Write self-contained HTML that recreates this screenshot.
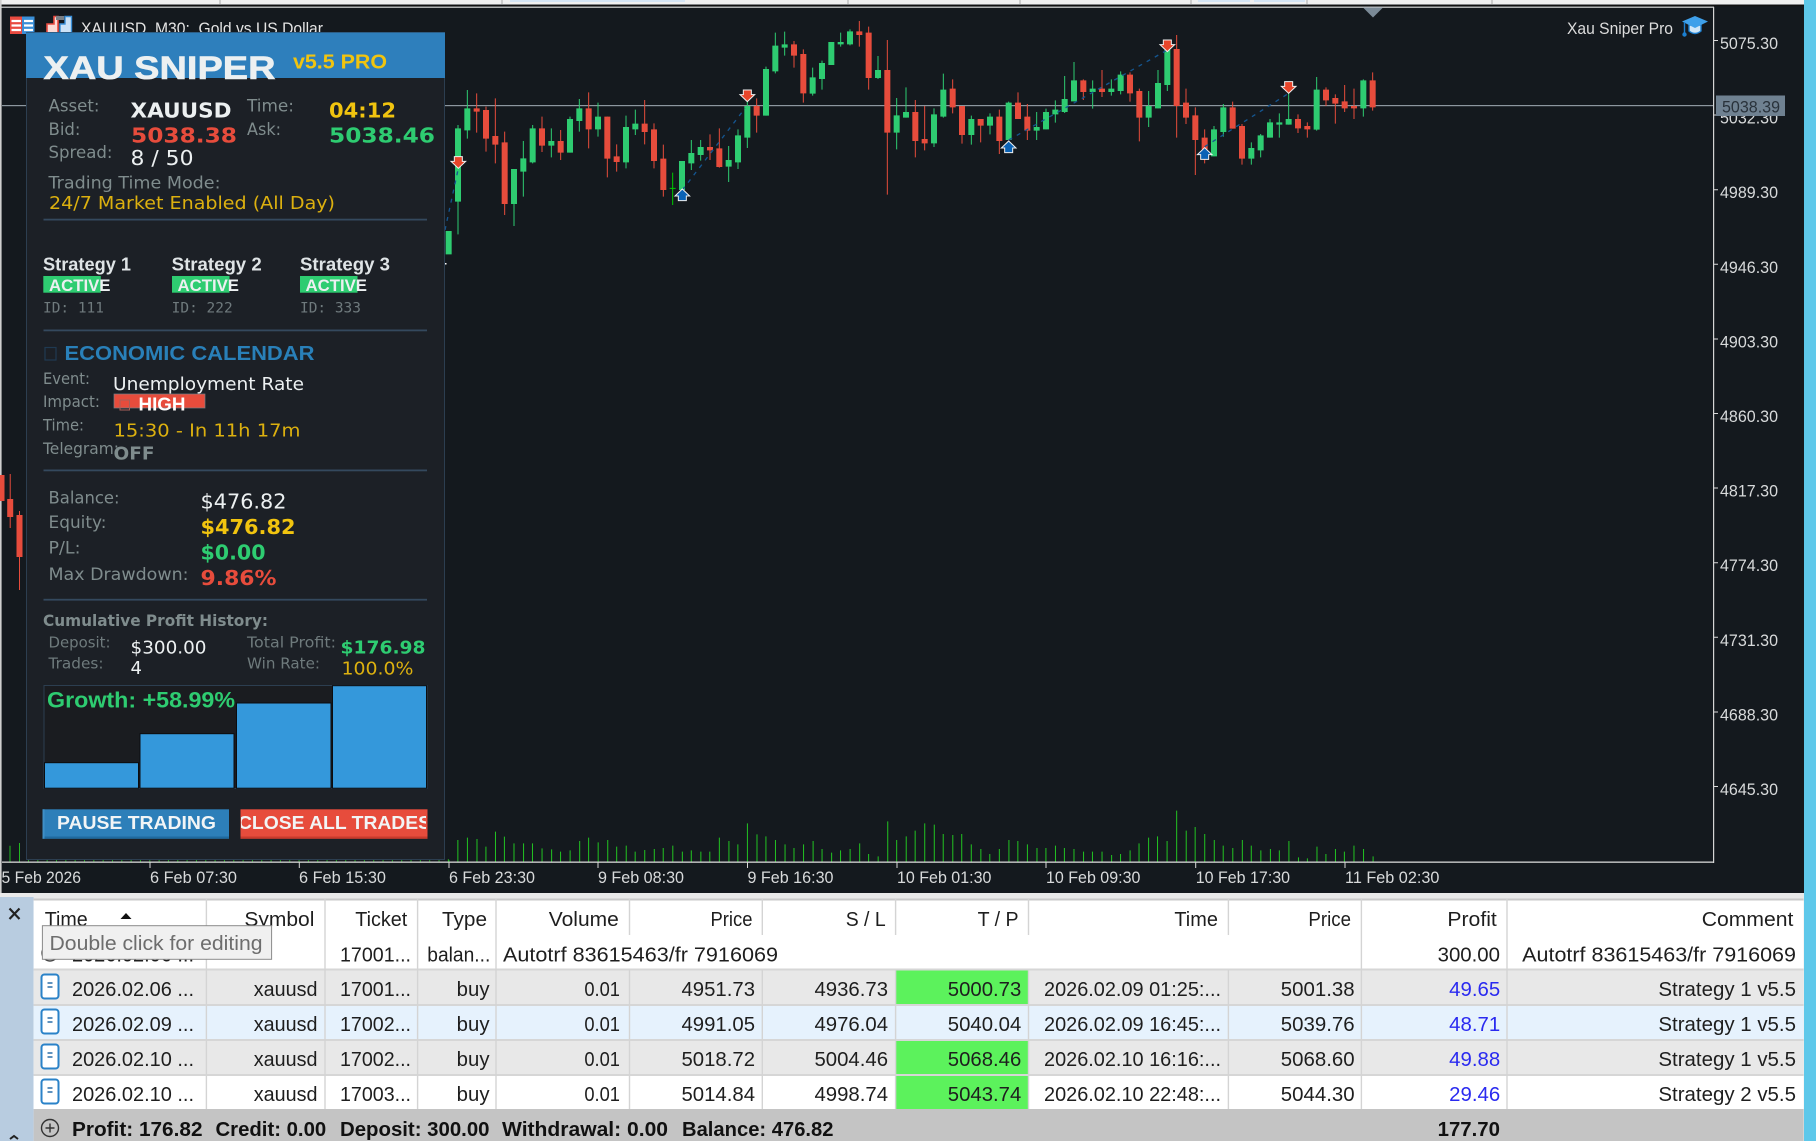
<!DOCTYPE html>
<html><head><meta charset="utf-8"><title>XAU Sniper</title>
<style>
html,body{margin:0;padding:0;background:#14191e;width:1816px;height:1141px;overflow:hidden}
svg{display:block;filter:blur(.35px)}
text{white-space:pre}
.d{font-family:"DejaVu Sans",sans-serif}
.db{font-family:"DejaVu Sans",sans-serif;font-weight:bold}
.l{font-family:"Liberation Sans",sans-serif}
.lb{font-family:"Liberation Sans",sans-serif;font-weight:bold}
.m{font-family:"DejaVu Sans Mono","Liberation Mono",monospace}
.g{fill:#7f8c8d}.w{fill:#ecf0f1}.y{fill:#f1c40f}.y2{fill:#dcb00f}.r{fill:#e74c3c}.n{fill:#2ecc71}
.ax{font-family:"Liberation Sans",sans-serif;font-size:17px;fill:#d8dadb}
.t{font-family:"Liberation Sans",sans-serif;font-size:20px;fill:#1e1e1e}
.tb{font-family:"Liberation Sans",sans-serif;font-size:20px;font-weight:bold;fill:#111}
.e{text-anchor:end}
.b{fill:#2a2af0}
</style></head><body>
<svg width="1816" height="1141" viewBox="0 0 1816 1141" xmlns="http://www.w3.org/2000/svg">
<defs>
<path id="ad" d="M-12 -17H12V-3H22L0 18L-22 -3H-12Z" fill="#e8452a" stroke="#f0f0f0" stroke-width="3"/>
<path id="au" d="M-12 17H12V3H22L0 -18L-22 3H-12Z" fill="#0a62b5" stroke="#f0f0f0" stroke-width="3"/>
<clipPath id="cl"><rect x="241" y="810" width="185" height="28"/></clipPath>
<clipPath id="chartclip"><rect x="0" y="7" width="1713" height="886"/></clipPath>
</defs>

<!-- base -->
<rect width="1816" height="1141" fill="#14191e"/>
<rect x="0" y="0" width="1816" height="4.5" fill="#f0f0f0"/>
<rect x="510" y="0" width="175" height="2" fill="#d5e5f5"/>
<rect x="1198" y="0" width="52" height="2" fill="#d5e5f5"/>
<rect x="1254" y="0" width="51" height="2" fill="#d5e5f5"/>
<rect x="1300" y="0" width="200" height="0" fill="#d5e5f5"/>
<rect x="1495" y="0" width="300" height="0" fill="#d5e5f5"/>
<path d="M220 0V4M502 0V4M848 0V4M1020 0V4M1191 0V4M1307 0V4M1492 0V4" stroke="#a8a8a8" stroke-width="1"/>
<rect x="0" y="5" width="1804" height="1.2" fill="#111"/>
<rect x="0" y="6.6" width="1714" height="1.2" fill="#d8d8d8"/>
<rect x="0" y="0" width="1.6" height="895" fill="#cfcfcf"/>
<rect x="1713" y="7" width="1.2" height="856" fill="#d5d5d5"/>

<!-- price line -->
<rect x="2" y="105" width="1711" height="1.2" fill="#8d979f"/>

<!-- volumes left and hidden -->
<path d="M10 862V845.7M19.5 862V843" stroke="#22b722" stroke-width="1"/>
<line x1="28" y1="860.5" x2="449" y2="860.5" stroke="#1f9d1f" stroke-width="3" stroke-dasharray="1 8.33"/>
<g transform="translate(440,780) scale(.6378,.3333)">
<path fill="none" stroke="#22c022" stroke-width="1.6" d="M14 247V240M28 247V180M43 247V173M58 247V177M72 247V200M87 247V155M101 247V170M116 247V190M131 247V190M145 247V190M160 247V205M175 247V208M189 247V215M204 247V211M219 247V183M233 247V173M248 247V187M263 247V180M277 247V200M292 247V197M306 247V215M321 247V210M336 247V207M350 247V204M365 247V197M380 247V215M394 247V211M409 247V215M423 247V215M438 247V173M453 247V183M467 247V193M482 247V130M497 247V163M511 247V169M526 247V180M541 247V193M555 247V204M570 247V193M585 247V183M599 247V207M614 247V218M628 247V211M643 247V207M658 247V190M672 247V222M687 247V229M702 247V124M716 247V180M731 247V169M745 247V152M760 247V130M775 247V134M789 247V162M804 247V165M818 247V162M833 247V193M848 247V207M862 247V222M877 247V207M892 247V180M906 247V183M921 247V193M936 247V204M950 247V204M965 247V197M979 247V204M994 247V207M1009 247V215M1023 247V215M1038 247V215M1053 247V225M1067 247V222M1082 247V211M1096 247V190M1111 247V173M1125 247V169M1140 247V183M1155 247V92M1170 247V152M1184 247V141M1199 247V162M1214 247V180M1228 247V197M1243 247V204M1258 247V180M1272 247V197M1287 247V211M1302 247V207M1316 247V211M1331 247V183M1346 247V232M1360 247V235M1375 247V200M1389 247V222M1404 247V207M1418 247V215M1433 247V197M1448 247V207M1463 247V229"/>
</g>

<!-- left red candles -->
<path d="M10.2 474V528M19.5 511V590" stroke="#e74c3c" stroke-width="1"/>
<path d="M1.5 475V501M10.2 499V517M19.5 515V557" stroke="#e74c3c" stroke-width="6" fill="none"/>

<!-- candles part 1 (coordinates in 3x) -->
<g transform="translate(440,0) scale(.33333)" fill="none">
<path stroke="#2ecc71" stroke-width="3" d="M54 375V703M82 270V416M222 507V678M250 423V590M278 375V490M334 385V472M390 350V458M418 297V395M474 308V410M558 347V505M586 329V405M726 483V575M754 420V510M782 420V482M866 438V546M894 388V507M922 305V444M978 200V347M1006 98V220M1034 95V167M1118 203V287M1146 182V269M1202 98V140M1230 88V136M1314 168V237M1370 294V448M1398 262V353M1482 325V441"/>
<path stroke="#e74c3c" stroke-width="3" d="M110 280V398M138 320V455M166 295V490M194 395V645M306 350V456M362 390V480M446 277V445M502 350V532M530 433V515M614 300V433M642 370V505M670 434V590M810 403V480M838 385V503M950 295V398M1062 123V203M1090 148V308M1258 63V140M1286 80V269M1342 120V584M1426 300V472M1454 318V451"/>
<path stroke="#2ecc71" stroke-width="18" d="M26 693V763M54 385V605M82 325V391M222 507V612M250 475V515M278 385V487M334 423V437M390 357V458M418 325V363M474 350V388M558 381V487M586 371V388M726 483V570M754 459V490M782 441V465M866 480V500M894 406V487M922 318V413M978 207V347M1006 137V214M1034 133V143M1118 232V281M1146 189V237M1174 126V195M1202 126V133M1230 94V133M1314 210V234M1370 346V398M1398 336V353M1482 343V430"/>
<path stroke="#e74c3c" stroke-width="18" d="M110 325V335M138 330V416M166 408V434M194 427V612M306 385V437M362 423V458M446 325V388M502 350V476M530 469V486M614 371V396M642 388V483M670 476V570M810 441V451M838 445V501M950 318V347M1062 133V167M1090 162V280M1258 94V105M1286 98V234M1342 210V398M1426 336V423M1454 417V430"/>
<path stroke="#00c800" stroke-width="3" d="M698 518V615M689 565H707"/>
<g stroke="#14558f" stroke-width="4" stroke-dasharray="12 16">
<path d="M15 690L55 505M727 570L915 325"/>
</g>
<use href="#ad" x="55" y="487"/><use href="#ad" x="922" y="287"/><use href="#au" x="727" y="585"/>
</g>
<!-- candles part 2 -->
<g transform="translate(930,0) scale(.33333)" fill="none">
<path stroke="#2ecc71" stroke-width="3" d="M40 221V353M124 347V434M180 340V403M236 305V420M320 336V420M348 326V388M376 301V368M404 228V339M432 186V304M488 241V326M544 238V287M572 214V283M656 273V381M684 210V325M712 140V273M852 378V469M880 312V410M964 427V494M992 402V472M1020 357V413M1048 340V413M1076 280V374M1160 231V392M1300 238V350"/>
<path stroke="#e74c3c" stroke-width="3" d="M68 238V340M96 318V431M152 357V427M208 329V462M264 277V357M292 312V420M460 238V300M516 210V291M600 217V305M628 266V424M740 105V413M768 266V372M796 322V525M824 388V490M908 305V386M936 372V494M1104 343V399M1132 367V413M1188 262V318M1216 283V371M1244 255V336M1272 266V357M1328 217V332"/>
<path stroke="#2ecc71" stroke-width="18" d="M40 269V350M124 357V405M180 350V377M236 308V420M320 381V392M348 336V388M376 329V343M404 297V336M432 241V304M488 266V276M544 266V276M572 224V273M656 318V353M684 249V325M712 150V255M852 388V469M880 322V396M964 444V476M992 406V451M1020 367V413M1048 367V374M1076 357V374M1160 269V389M1300 241V325"/>
<path stroke="#e74c3c" stroke-width="18" d="M68 266V322M96 318V405M152 357V377M208 350V423M264 308V357M292 350V392M460 241V276M516 266V276M600 224V280M628 273V353M740 147V318M768 308V353M796 346V420M824 413V448M908 322V386M936 378V476M1104 357V385M1132 378V388M1188 269V301M1216 294V311M1244 304V325M1272 318V325M1328 241V322"/>
<g stroke="#14558f" stroke-width="4" stroke-dasharray="12 16">
<path d="M236 420L712 150M824 440L1076 280"/>
</g>
<use href="#ad" x="712" y="137"/><use href="#ad" x="1076" y="262"/><use href="#au" x="236" y="441"/><use href="#au" x="824" y="461"/>
</g>
<rect x="445" y="263" width="1.5" height="1.5" fill="#fff"/>

<!-- top triangle -->
<path d="M1363 7.5H1383L1373 17.5Z" fill="#7b8a97"/>

<!-- axis -->
<rect x="2" y="861.5" width="1712" height="1.3" fill="#d8d8d8"/>
<path d="M150 862V868M299.3 862V868M449 862V868M598 862V868M747.5 862V868M897 862V868M1046 862V868M1195.7 862V868M1345 862V868" stroke="#d8d8d8" stroke-width="1"/>
<g class="ax">
<text x="1.5" y="883" textLength="79.5" lengthAdjust="spacingAndGlyphs">5 Feb 2026</text>
<text x="150" y="883" textLength="87" lengthAdjust="spacingAndGlyphs">6 Feb 07:30</text>
<text x="299" y="883" textLength="87" lengthAdjust="spacingAndGlyphs">6 Feb 15:30</text>
<text x="449" y="883" textLength="86" lengthAdjust="spacingAndGlyphs">6 Feb 23:30</text>
<text x="598" y="883" textLength="86" lengthAdjust="spacingAndGlyphs">9 Feb 08:30</text>
<text x="747.5" y="883" textLength="86" lengthAdjust="spacingAndGlyphs">9 Feb 16:30</text>
<text x="897" y="883" textLength="94.4" lengthAdjust="spacingAndGlyphs">10 Feb 01:30</text>
<text x="1046" y="883" textLength="94.4" lengthAdjust="spacingAndGlyphs">10 Feb 09:30</text>
<text x="1195.7" y="883" textLength="94.4" lengthAdjust="spacingAndGlyphs">10 Feb 17:30</text>
<text x="1345" y="883" textLength="94.4" lengthAdjust="spacingAndGlyphs">11 Feb 02:30</text>
</g>
<path d="M1714 40.5H1718M1714 115H1718M1714 189.7H1718M1714 264.3H1718M1714 339H1718M1714 413.5H1718M1714 488H1718M1714 562.7H1718M1714 637.3H1718M1714 712H1718M1714 786.5H1718" stroke="#d8d8d8" stroke-width="1"/>
<g class="ax">
<text x="1720" y="49" textLength="58" lengthAdjust="spacingAndGlyphs">5075.30</text>
<text x="1720" y="123.6" textLength="58" lengthAdjust="spacingAndGlyphs">5032.30</text>
<text x="1720" y="198.2" textLength="58" lengthAdjust="spacingAndGlyphs">4989.30</text>
<text x="1720" y="272.8" textLength="58" lengthAdjust="spacingAndGlyphs">4946.30</text>
<text x="1720" y="347.4" textLength="58" lengthAdjust="spacingAndGlyphs">4903.30</text>
<text x="1720" y="422" textLength="58" lengthAdjust="spacingAndGlyphs">4860.30</text>
<text x="1720" y="496.6" textLength="58" lengthAdjust="spacingAndGlyphs">4817.30</text>
<text x="1720" y="571.2" textLength="58" lengthAdjust="spacingAndGlyphs">4774.30</text>
<text x="1720" y="645.8" textLength="58" lengthAdjust="spacingAndGlyphs">4731.30</text>
<text x="1720" y="720.4" textLength="58" lengthAdjust="spacingAndGlyphs">4688.30</text>
<text x="1720" y="795" textLength="58" lengthAdjust="spacingAndGlyphs">4645.30</text>
</g>
<rect x="1716" y="95.5" width="69" height="20.5" fill="#6f8191"/>
<text class="l" x="1722" y="112.5" font-size="17" fill="#29323b" textLength="58" lengthAdjust="spacingAndGlyphs">5038.39</text>

<!-- top right label and hat -->
<text class="l" x="1567" y="34" font-size="17" fill="#dcdcdc" textLength="106" lengthAdjust="spacingAndGlyphs">Xau Sniper Pro</text>
<path d="M1689 25V31Q1695 36 1701 31V25Z" fill="#cfe6f8" stroke="#1c7fd0" stroke-width="1.4"/>
<path d="M1695 16L1708 21.5L1695 28L1682 21.5Z" fill="#3ea0ea"/>
<path d="M1684.5 22V33" stroke="#1c7fd0" stroke-width="1.4"/>
<circle cx="1684.5" cy="34.5" r="2.2" fill="#1c7fd0"/>

<!-- top left icons + title -->
<rect x="10" y="16.5" width="13" height="17.5" fill="#e84a40"/>
<rect x="22" y="16.5" width="12.5" height="17.5" fill="#3a8fd8"/>
<path d="M11.5 21H21M11.5 25.5H21M11.5 30H21M24 21H33M24 25.5H33M24 30H33" stroke="#fff" stroke-width="2.2"/>
<path d="M47 24H54V16.5H58V34H47Z" fill="#fbdad6" stroke="#e84a40" stroke-width="1.6"/>
<rect x="56" y="16" width="8" height="4" fill="#7a7f85"/>
<path d="M60 34V24H65V16.5H71.5V34Z" fill="#cde2f6" stroke="#3a8fd8" stroke-width="1.4"/>
<text class="l" x="81" y="34" font-size="17" fill="#e4e4e4" textLength="242" lengthAdjust="spacingAndGlyphs">XAUUSD, M30:  Gold vs US Dollar</text>

<!-- PANEL -->
<rect x="26.5" y="32.5" width="418" height="827" fill="#1c2026" stroke="#2c3e50" stroke-width="1"/>
<rect x="26" y="32.5" width="419" height="45.5" fill="#2e7fbc"/>
<text class="lb" x="43.5" y="79" font-size="32" fill="#ecf0f1" stroke="#ecf0f1" stroke-width=".6" textLength="232" lengthAdjust="spacingAndGlyphs">XAU SNIPER</text>
<text class="lb y" x="293" y="68.3" font-size="20" textLength="94" lengthAdjust="spacingAndGlyphs">v5.5 PRO</text>

<text class="d g" x="48.5" y="111.7" font-size="17" textLength="51" lengthAdjust="spacingAndGlyphs">Asset:</text>
<text class="db w" x="130.5" y="117.5" font-size="20" textLength="101" lengthAdjust="spacingAndGlyphs">XAUUSD</text>
<text class="d g" x="247" y="111.7" font-size="17" textLength="47" lengthAdjust="spacingAndGlyphs">Time:</text>
<text class="db y" x="329" y="117.5" font-size="20" textLength="67" lengthAdjust="spacingAndGlyphs">04:12</text>
<text class="d g" x="48.5" y="135" font-size="17" textLength="32" lengthAdjust="spacingAndGlyphs">Bid:</text>
<text class="db r" x="131" y="142.7" font-size="20" textLength="106" lengthAdjust="spacingAndGlyphs">5038.38</text>
<text class="d g" x="247" y="135" font-size="17" textLength="34" lengthAdjust="spacingAndGlyphs">Ask:</text>
<text class="db n" x="329" y="142.7" font-size="20" textLength="106" lengthAdjust="spacingAndGlyphs">5038.46</text>
<text class="d g" x="48.5" y="158" font-size="17" textLength="64" lengthAdjust="spacingAndGlyphs">Spread:</text>
<text class="d w" x="130.5" y="165" font-size="20" textLength="63" lengthAdjust="spacingAndGlyphs">8 / 50</text>
<text class="d g" x="48.5" y="188.3" font-size="17" textLength="172" lengthAdjust="spacingAndGlyphs">Trading Time Mode:</text>
<text class="d y2" x="49" y="209" font-size="18" textLength="286" lengthAdjust="spacingAndGlyphs">24/7 Market Enabled (All Day)</text>
<rect x="43.5" y="218.7" width="383.5" height="1.8" fill="#34495e"/>

<text class="lb" x="43" y="270.7" font-size="18" fill="#dfe4e6" textLength="88" lengthAdjust="spacingAndGlyphs">Strategy 1</text>
<text class="lb" x="171.7" y="270.7" font-size="18" fill="#dfe4e6" textLength="90" lengthAdjust="spacingAndGlyphs">Strategy 2</text>
<text class="lb" x="300" y="270.7" font-size="18" fill="#dfe4e6" textLength="90" lengthAdjust="spacingAndGlyphs">Strategy 3</text>
<rect x="43.3" y="276" width="57.5" height="16.7" fill="#2ecc71"/>
<rect x="172" y="276" width="57.5" height="16.7" fill="#2ecc71"/>
<rect x="300" y="276" width="57.5" height="16.7" fill="#2ecc71"/>
<text class="lb" x="49" y="291" font-size="17" fill="#ecf0f1" textLength="61.5" lengthAdjust="spacingAndGlyphs">ACTIVE</text>
<text class="lb" x="177.5" y="291" font-size="17" fill="#ecf0f1" textLength="61.5" lengthAdjust="spacingAndGlyphs">ACTIVE</text>
<text class="lb" x="305.5" y="291" font-size="17" fill="#ecf0f1" textLength="61.5" lengthAdjust="spacingAndGlyphs">ACTIVE</text>
<text class="m" x="43" y="312.7" font-size="14" fill="#6f7a7d" textLength="61" lengthAdjust="spacingAndGlyphs">ID: 111</text>
<text class="m" x="171.7" y="312.7" font-size="14" fill="#6f7a7d" textLength="61" lengthAdjust="spacingAndGlyphs">ID: 222</text>
<text class="m" x="300" y="312.7" font-size="14" fill="#6f7a7d" textLength="61" lengthAdjust="spacingAndGlyphs">ID: 333</text>
<rect x="43.5" y="329.5" width="383.5" height="1.8" fill="#34495e"/>

<rect x="45" y="347.5" width="11" height="12.5" fill="none" stroke="#1f3a52" stroke-width="1.2"/>
<text class="lb" x="64.5" y="360" font-size="20" fill="#2980b9" textLength="250" lengthAdjust="spacingAndGlyphs">ECONOMIC CALENDAR</text>
<text class="d g" x="43" y="384" font-size="16" textLength="47" lengthAdjust="spacingAndGlyphs">Event:</text>
<text class="d w" x="113" y="390" font-size="18" textLength="191" lengthAdjust="spacingAndGlyphs">Unemployment Rate</text>
<text class="d g" x="43" y="407" font-size="16" textLength="57" lengthAdjust="spacingAndGlyphs">Impact:</text>
<rect x="114" y="394" width="91" height="14" fill="#e74c3c" stroke="#7a7f85" stroke-width=".7"/>
<rect x="120" y="400" width="9.5" height="10" fill="none" stroke="#a8605a" stroke-width="1"/>
<text class="lb" x="138.5" y="410.7" font-size="18" fill="#fff" textLength="47" lengthAdjust="spacingAndGlyphs">HIGH</text>
<text class="d g" x="43" y="430.7" font-size="16" textLength="41" lengthAdjust="spacingAndGlyphs">Time:</text>
<text class="d y2" x="113.5" y="436.7" font-size="18" textLength="187" lengthAdjust="spacingAndGlyphs">15:30 - In 11h 17m</text>
<text class="d g" x="43" y="454" font-size="16" textLength="76" lengthAdjust="spacingAndGlyphs">Telegram:</text>
<text class="db g" x="113.5" y="459.3" font-size="18" textLength="41" lengthAdjust="spacingAndGlyphs">OFF</text>
<rect x="43.5" y="469.5" width="383.5" height="1.8" fill="#34495e"/>

<text class="d g" x="48.5" y="503.3" font-size="17" textLength="71" lengthAdjust="spacingAndGlyphs">Balance:</text>
<text class="d w" x="200.5" y="508.3" font-size="20" textLength="86" lengthAdjust="spacingAndGlyphs">$476.82</text>
<text class="d g" x="48.5" y="528" font-size="17" textLength="58" lengthAdjust="spacingAndGlyphs">Equity:</text>
<text class="db y" x="200.5" y="534" font-size="20" textLength="95" lengthAdjust="spacingAndGlyphs">$476.82</text>
<text class="d g" x="48.5" y="553.5" font-size="17" textLength="32" lengthAdjust="spacingAndGlyphs">P/L:</text>
<text class="db n" x="200.5" y="559.3" font-size="20" textLength="65" lengthAdjust="spacingAndGlyphs">$0.00</text>
<text class="d g" x="48.5" y="580" font-size="17" textLength="140" lengthAdjust="spacingAndGlyphs">Max Drawdown:</text>
<text class="db r" x="200.5" y="585" font-size="20" textLength="76" lengthAdjust="spacingAndGlyphs">9.86%</text>
<rect x="43.5" y="598.8" width="383.5" height="1.8" fill="#34495e"/>

<text class="db g" x="43" y="626" font-size="16" textLength="225" lengthAdjust="spacingAndGlyphs">Cumulative Profit History:</text>
<text class="d" x="48.5" y="647.7" font-size="15" fill="#6e7a7c" textLength="62" lengthAdjust="spacingAndGlyphs">Deposit:</text>
<text class="d w" x="130.5" y="653.3" font-size="18" textLength="76" lengthAdjust="spacingAndGlyphs">$300.00</text>
<text class="d" x="247" y="647.7" font-size="15" fill="#6e7a7c" textLength="89" lengthAdjust="spacingAndGlyphs">Total Profit:</text>
<text class="db n" x="340.5" y="653.3" font-size="18" textLength="85" lengthAdjust="spacingAndGlyphs">$176.98</text>
<text class="d" x="48.5" y="668.7" font-size="15" fill="#6e7a7c" textLength="55" lengthAdjust="spacingAndGlyphs">Trades:</text>
<text class="d w" x="130.5" y="674" font-size="18">4</text>
<text class="d" x="247" y="668.7" font-size="15" fill="#6e7a7c" textLength="73" lengthAdjust="spacingAndGlyphs">Win Rate:</text>
<text class="d y2" x="341.5" y="674.3" font-size="18" textLength="72" lengthAdjust="spacingAndGlyphs">100.0%</text>

<rect x="44" y="685.5" width="383" height="103" fill="#1a1c20" stroke="#2c3e50" stroke-width="1"/>
<g fill="#3498db" stroke="#0b0d10" stroke-width="1">
<rect x="44.5" y="762.7" width="94" height="25.5"/>
<rect x="140" y="733.7" width="94" height="54.5"/>
<rect x="236.5" y="703" width="94.5" height="85.2"/>
<rect x="332.5" y="685.7" width="94" height="102.5"/>
</g>
<text class="lb n" x="47" y="707.7" font-size="22" textLength="188" lengthAdjust="spacingAndGlyphs">Growth: +58.99%</text>

<rect x="42.5" y="809.3" width="186.5" height="29.4" fill="#2d7fb9"/>
<rect x="42.5" y="836.5" width="186.5" height="2.2" fill="#1f6a9f"/>
<rect x="42.5" y="809.3" width="2" height="29.4" fill="#3f8fc6"/>
<text class="lb" x="57" y="829" font-size="18" fill="#f2f5f6" textLength="159" lengthAdjust="spacingAndGlyphs">PAUSE TRADING</text>
<rect x="240.5" y="809.3" width="187" height="29.4" fill="#e74c3c"/>
<rect x="240.5" y="836.5" width="187" height="2.2" fill="#c93a2c"/>
<g clip-path="url(#cl)"><text class="lb" x="238" y="829" font-size="18" fill="#f2f5f6" textLength="193" lengthAdjust="spacingAndGlyphs">CLOSE ALL TRADES</text></g>

<!-- BOTTOM TABLE AREA -->
<rect x="0" y="893" width="1804" height="248" fill="#e9e9e9"/>
<rect x="0" y="897" width="33.6" height="244" fill="#b8cce0"/>
<rect x="33.6" y="899" width="1770" height="242" fill="#fff"/>
<rect x="33.6" y="898.5" width="1770" height="2" fill="#c9c9c9"/>
<rect x="33.6" y="970" width="1770" height="35" fill="#e8e8e8"/>
<rect x="33.6" y="1005" width="1770" height="35" fill="#e6f2fd"/>
<rect x="33.6" y="1040" width="1770" height="35" fill="#e8e8e8"/>
<rect x="33.6" y="1075" width="1770" height="34" fill="#fff"/>
<rect x="896" y="970" width="132.5" height="35" fill="#5cf25c"/>
<rect x="896" y="1040" width="132.5" height="35" fill="#5cf25c"/>
<rect x="896" y="1075" width="132.5" height="34" fill="#5cf25c"/>
<path d="M33.6 969.5H1803.6M33.6 1005H1803.6M33.6 1040H1803.6M33.6 1075H1803.6" stroke="#d6d6d6" stroke-width="2"/>
<path d="M206.4 899V1109M325 899V1109M417.6 899V1109M496 899V1109M1361.4 899V1109M1507 899V1109" stroke="#d4d4d4" stroke-width="1.4"/>
<path d="M629.5 899V935M762.3 899V935M895.6 899V935M1028.5 899V935M1228.4 899V935M629.5 970V1109M762.3 970V1109M895.6 970V1109M1028.5 970V1109M1228.4 970V1109" stroke="#d4d4d4" stroke-width="1.4"/>
<rect x="33.6" y="1109" width="1770" height="32" fill="#c4c4c4"/>

<path d="M9.5 908.5L19.5 919M19.5 908.5L9.5 919" stroke="#222" stroke-width="2.2"/>
<path d="M10 1139L14 1136L18 1139" stroke="#222" stroke-width="2" fill="none"/>

<!-- header -->
<g class="t">
<text x="44.7" y="926" textLength="43" lengthAdjust="spacingAndGlyphs">Time</text>
<text class="e" x="314.4" y="926" textLength="70" lengthAdjust="spacingAndGlyphs">Symbol</text>
<text class="e" x="407.3" y="926" textLength="52" lengthAdjust="spacingAndGlyphs">Ticket</text>
<text class="e" x="487" y="926" textLength="45" lengthAdjust="spacingAndGlyphs">Type</text>
<text class="e" x="618.8" y="926" textLength="70" lengthAdjust="spacingAndGlyphs">Volume</text>
<text class="e" x="752.5" y="926" textLength="42" lengthAdjust="spacingAndGlyphs">Price</text>
<text class="e" x="885.7" y="926" textLength="40" lengthAdjust="spacingAndGlyphs">S / L</text>
<text class="e" x="1018.6" y="926" textLength="41" lengthAdjust="spacingAndGlyphs">T / P</text>
<text class="e" x="1217.9" y="926" textLength="43.5" lengthAdjust="spacingAndGlyphs">Time</text>
<text class="e" x="1351" y="926" textLength="42.6" lengthAdjust="spacingAndGlyphs">Price</text>
<text class="e" x="1496.8" y="926" textLength="49.4" lengthAdjust="spacingAndGlyphs">Profit</text>
<text class="e" x="1793.4" y="926" textLength="91.6" lengthAdjust="spacingAndGlyphs">Comment</text>
</g>
<path d="M120.5 919H131.5L126 913Z" fill="#111"/>

<!-- row 0 -->
<circle cx="50" cy="953" r="8" fill="none" stroke="#444" stroke-width="1.4"/>
<g class="t">
<text x="72" y="961.7" textLength="122" lengthAdjust="spacingAndGlyphs">2026.02.06 ...</text>
<text class="e" x="411" y="961.7" textLength="71" lengthAdjust="spacingAndGlyphs">17001...</text>
<text class="e" x="490.3" y="961.7" textLength="63" lengthAdjust="spacingAndGlyphs">balan...</text>
<text x="503" y="961.7" textLength="275" lengthAdjust="spacingAndGlyphs">Autotrf 83615463/fr 7916069</text>
<text class="e" x="1500" y="961.7" textLength="62.4" lengthAdjust="spacingAndGlyphs">300.00</text>
<text class="e" x="1796" y="961.7" textLength="273.8" lengthAdjust="spacingAndGlyphs">Autotrf 83615463/fr 7916069</text>
</g>
<!-- tooltip -->
<rect x="42.4" y="925.7" width="229.2" height="33.6" fill="#f0f0f0" stroke="#8a8a8a" stroke-width="1"/>
<text class="l" x="49.5" y="950" font-size="20" fill="#6d6d6d" textLength="213" lengthAdjust="spacingAndGlyphs">Double click for editing</text>

<!-- doc icons -->
<g fill="#fff" stroke="#2a82c8" stroke-width="2">
<rect x="41.5" y="974.5" width="17" height="24" rx="3"/>
<rect x="41.5" y="1009.5" width="17" height="24" rx="3"/>
<rect x="41.5" y="1044.5" width="17" height="24" rx="3"/>
<rect x="41.5" y="1079.5" width="17" height="24" rx="3"/>
</g>
<path d="M47.5 983H52.5M47.5 987H52.5M47.5 1018H52.5M47.5 1022H52.5M47.5 1053H52.5M47.5 1057H52.5M47.5 1088H52.5M47.5 1092H52.5" stroke="#2a6ea8" stroke-width="1.4"/>

<!-- rows -->
<g class="t">
<text x="72" y="996" textLength="122" lengthAdjust="spacingAndGlyphs">2026.02.06 ...</text>
<text class="e" x="317.5" y="996" textLength="63.7" lengthAdjust="spacingAndGlyphs">xauusd</text>
<text class="e" x="411" y="996" textLength="71" lengthAdjust="spacingAndGlyphs">17001...</text>
<text class="e" x="489.5" y="996" textLength="32.8" lengthAdjust="spacingAndGlyphs">buy</text>
<text class="e" x="620" y="996" textLength="35.6" lengthAdjust="spacingAndGlyphs">0.01</text>
<text class="e" x="755" y="996" textLength="73.5" lengthAdjust="spacingAndGlyphs">4951.73</text>
<text class="e" x="888" y="996" textLength="73.5" lengthAdjust="spacingAndGlyphs">4936.73</text>
<text class="e" x="1021.3" y="996" textLength="73.5" lengthAdjust="spacingAndGlyphs">5000.73</text>
<text x="1044" y="996" textLength="177" lengthAdjust="spacingAndGlyphs">2026.02.09 01:25:...</text>
<text class="e" x="1354.6" y="996" textLength="73.8" lengthAdjust="spacingAndGlyphs">5001.38</text>
<text class="e b" x="1500.2" y="996" textLength="51" lengthAdjust="spacingAndGlyphs">49.65</text>
<text class="e" x="1796" y="996" textLength="137.6" lengthAdjust="spacingAndGlyphs">Strategy 1 v5.5</text>

<text x="72" y="1031" textLength="122" lengthAdjust="spacingAndGlyphs">2026.02.09 ...</text>
<text class="e" x="317.5" y="1031" textLength="63.7" lengthAdjust="spacingAndGlyphs">xauusd</text>
<text class="e" x="411" y="1031" textLength="71" lengthAdjust="spacingAndGlyphs">17002...</text>
<text class="e" x="489.5" y="1031" textLength="32.8" lengthAdjust="spacingAndGlyphs">buy</text>
<text class="e" x="620" y="1031" textLength="35.6" lengthAdjust="spacingAndGlyphs">0.01</text>
<text class="e" x="755" y="1031" textLength="73.5" lengthAdjust="spacingAndGlyphs">4991.05</text>
<text class="e" x="888" y="1031" textLength="73.5" lengthAdjust="spacingAndGlyphs">4976.04</text>
<text class="e" x="1021.3" y="1031" textLength="73.5" lengthAdjust="spacingAndGlyphs">5040.04</text>
<text x="1044" y="1031" textLength="177" lengthAdjust="spacingAndGlyphs">2026.02.09 16:45:...</text>
<text class="e" x="1354.6" y="1031" textLength="73.8" lengthAdjust="spacingAndGlyphs">5039.76</text>
<text class="e b" x="1500.2" y="1031" textLength="51" lengthAdjust="spacingAndGlyphs">48.71</text>
<text class="e" x="1796" y="1031" textLength="137.6" lengthAdjust="spacingAndGlyphs">Strategy 1 v5.5</text>

<text x="72" y="1066" textLength="122" lengthAdjust="spacingAndGlyphs">2026.02.10 ...</text>
<text class="e" x="317.5" y="1066" textLength="63.7" lengthAdjust="spacingAndGlyphs">xauusd</text>
<text class="e" x="411" y="1066" textLength="71" lengthAdjust="spacingAndGlyphs">17002...</text>
<text class="e" x="489.5" y="1066" textLength="32.8" lengthAdjust="spacingAndGlyphs">buy</text>
<text class="e" x="620" y="1066" textLength="35.6" lengthAdjust="spacingAndGlyphs">0.01</text>
<text class="e" x="755" y="1066" textLength="73.5" lengthAdjust="spacingAndGlyphs">5018.72</text>
<text class="e" x="888" y="1066" textLength="73.5" lengthAdjust="spacingAndGlyphs">5004.46</text>
<text class="e" x="1021.3" y="1066" textLength="73.5" lengthAdjust="spacingAndGlyphs">5068.46</text>
<text x="1044" y="1066" textLength="177" lengthAdjust="spacingAndGlyphs">2026.02.10 16:16:...</text>
<text class="e" x="1354.6" y="1066" textLength="73.8" lengthAdjust="spacingAndGlyphs">5068.60</text>
<text class="e b" x="1500.2" y="1066" textLength="51" lengthAdjust="spacingAndGlyphs">49.88</text>
<text class="e" x="1796" y="1066" textLength="137.6" lengthAdjust="spacingAndGlyphs">Strategy 1 v5.5</text>

<text x="72" y="1101" textLength="122" lengthAdjust="spacingAndGlyphs">2026.02.10 ...</text>
<text class="e" x="317.5" y="1101" textLength="63.7" lengthAdjust="spacingAndGlyphs">xauusd</text>
<text class="e" x="411" y="1101" textLength="71" lengthAdjust="spacingAndGlyphs">17003...</text>
<text class="e" x="489.5" y="1101" textLength="32.8" lengthAdjust="spacingAndGlyphs">buy</text>
<text class="e" x="620" y="1101" textLength="35.6" lengthAdjust="spacingAndGlyphs">0.01</text>
<text class="e" x="755" y="1101" textLength="73.5" lengthAdjust="spacingAndGlyphs">5014.84</text>
<text class="e" x="888" y="1101" textLength="73.5" lengthAdjust="spacingAndGlyphs">4998.74</text>
<text class="e" x="1021.3" y="1101" textLength="73.5" lengthAdjust="spacingAndGlyphs">5043.74</text>
<text x="1044" y="1101" textLength="177" lengthAdjust="spacingAndGlyphs">2026.02.10 22:48:...</text>
<text class="e" x="1354.6" y="1101" textLength="73.8" lengthAdjust="spacingAndGlyphs">5044.30</text>
<text class="e b" x="1500.2" y="1101" textLength="51" lengthAdjust="spacingAndGlyphs">29.46</text>
<text class="e" x="1796" y="1101" textLength="137.6" lengthAdjust="spacingAndGlyphs">Strategy 2 v5.5</text>
</g>

<!-- summary -->
<circle cx="50" cy="1128" r="8.5" fill="none" stroke="#333" stroke-width="1.4"/>
<path d="M45.5 1128H54.5M50 1123.5V1132.5" stroke="#333" stroke-width="1.4"/>
<g class="tb">
<text x="72" y="1136" textLength="130.5" lengthAdjust="spacingAndGlyphs">Profit: 176.82</text>
<text x="215.5" y="1136" textLength="110.7" lengthAdjust="spacingAndGlyphs">Credit: 0.00</text>
<text x="340" y="1136" textLength="149.5" lengthAdjust="spacingAndGlyphs">Deposit: 300.00</text>
<text x="502" y="1136" textLength="166" lengthAdjust="spacingAndGlyphs">Withdrawal: 0.00</text>
<text x="682" y="1136" textLength="151.5" lengthAdjust="spacingAndGlyphs">Balance: 476.82</text>
<text class="e" x="1500" y="1136" textLength="62.4" lengthAdjust="spacingAndGlyphs">177.70</text>
</g>

<!-- right cyan edge -->
<rect x="1804" y="0" width="12" height="1141" fill="#5ec8ea"/>
</svg>
</body></html>
